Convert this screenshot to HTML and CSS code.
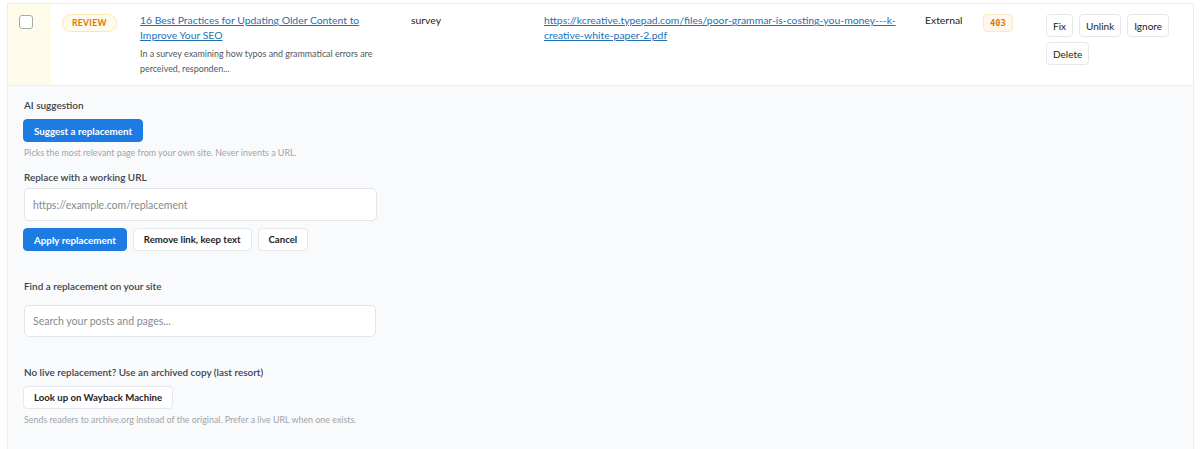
FILE: index.html
```
<!DOCTYPE html>
<html lang="en">
<head>
    <meta charset="UTF-8">
    <meta name="viewport" content="width=device-width, initial-scale=1.0">
    <title>Broken Links</title>
    <link rel="stylesheet" href="styles.css">
</head>
<body>
    <div class="wrap">
        <table class="links">
            <tbody>
                <tr class="link-row">
                    <td class="col-check"><span class="checkbox"></span></td>
                    <td class="col-status"><span class="badge-review">Review</span></td>
                    <td class="col-post">
                        <a href="#" class="post-title">16 Best Practices for Updating Older Content to Improve Your SEO</a>
                        <p class="excerpt">In a survey examining how typos and grammatical errors are perceived, responden...</p>
                    </td>
                    <td class="col-anchor">survey</td>
                    <td class="col-url"><a href="#">https://kcreative.typepad.com/files/poor-grammar-is-costing-you-money---k-creative-white-paper-2.pdf</a></td>
                    <td class="col-type">External</td>
                    <td class="col-code"><span class="badge-code">403</span></td>
                    <td class="col-actions">
                        <div class="actions">
                            <button class="btn">Fix</button>
                            <button class="btn">Unlink</button>
                            <button class="btn">Ignore</button>
                            <button class="btn">Delete</button>
                        </div>
                    </td>
                </tr>
                <tr class="fix-row">
                    <td colspan="8">
                        <div class="fix-panel">
                            <div class="section">
                                <div class="label">AI suggestion</div>
                                <button class="btn btn-primary">Suggest a replacement</button>
                                <div class="hint">Picks the most relevant page from your own site. Never invents a URL.</div>
                            </div>

                            <div class="section section-url">
                                <div class="label">Replace with a working URL</div>
                                <input type="text" class="field" placeholder="https://example.com/replacement">
                                <div class="btn-row">
                                    <button class="btn btn-primary">Apply replacement</button>
                                    <button class="btn btn-light">Remove link, keep text</button>
                                    <button class="btn btn-light">Cancel</button>
                                </div>
                            </div>

                            <div class="section section-search">
                                <div class="label">Find a replacement on your site</div>
                                <input type="text" class="field field-search" placeholder="Search your posts and pages...">
                            </div>

                            <div class="section section-archive">
                                <div class="label">No live replacement? Use an archived copy (last resort)</div>
                                <button class="btn btn-light">Look up on Wayback Machine</button>
                                <div class="hint">Sends readers to archive.org instead of the original. Prefer a live URL when one exists.</div>
                            </div>
                        </div>
                    </td>
                </tr>
            </tbody>
        </table>
    </div>
</body>
</html>
```

FILE: styles.css
```
body {
    margin: 0;
    background: #fff;
    font-family: Lato, "Noto Sans", sans-serif;
    color: #1d2327;
}
.wrap {
    padding: 3px 6px 0 7px;
}
.links {
    width: 100%;
    border-collapse: collapse;
    table-layout: fixed;
}
.link-row td {
    vertical-align: top;
    padding: 9px 12px 9px;
    border-top: 1px solid #eceef1;
    border-bottom: 1px solid #eceef1;
    font-size: 10.4px;
    line-height: 15px;
}
.link-row td:last-child {
    border-right: 1px solid #eceef1;
}
.col-check {
    width: 19px;
    background: #fffbeb;
    border-left: 1px solid #eceef1;
}
.col-status { width: 53px; }
.col-post { width: 247px; }
.col-anchor { width: 109px; }
.col-url { width: 357px; }
.col-type { width: 35px; }
.col-code { width: 39px; }

.checkbox {
    display: block;
    width: 12px;
    height: 12px;
    margin: 2px 0 0 -1px;
    border: 1px solid #a7aaad;
    border-radius: 3px;
    background: #fff;
}
.badge-review {
    display: inline-block;
    margin: 1px 0 0 -1px;
    padding: 0 9px;
    height: 16px;
    line-height: 16px;
    border: 1px solid #fde7b0;
    border-radius: 10px;
    background: #fffbeb;
    color: #d97706;
    font-size: 8.6px;
    font-weight: 700;
    letter-spacing: 0.3px;
    text-transform: uppercase;
}
a {
    color: #2271b1;
}
.post-title {
    display: block;
}
.excerpt {
    margin: 3px 0 0;
    font-size: 8.9px;
    line-height: 15px;
    color: #50575e;
}
.badge-code {
    display: inline-block;
    margin: 1px 0 0 -1px;
    padding: 0 6px;
    height: 16px;
    line-height: 16px;
    border: 1px solid #fde8c4;
    border-radius: 4px;
    background: #fff7ed;
    color: #d97706;
    font-family: "DejaVu Sans Mono", monospace;
    font-size: 8.8px;
    font-weight: 700;
}

.actions {
    display: flex;
    flex-wrap: wrap;
    gap: 5px 6px;
    margin: 1px 0 0 -1px;
}
.btn {
    height: 23px;
    padding: 0 6px;
    border: 1px solid #e6e8eb;
    border-radius: 4px;
    background: #fff;
    color: #1d2327;
    font-family: inherit;
    font-size: 10px;
    cursor: pointer;
}

.fix-row td {
    padding: 0;
    border-left: 1px solid #eceef1;
    border-right: 1px solid #eceef1;
    background: #f9fafb;
}
.fix-panel {
    padding: 12px 16px 30px;
}
.label {
    font-size: 9.95px;
    line-height: 14px;
    font-weight: 600;
    color: #3c434a;
}
.section .btn {
    display: block;
    margin-left: -1px;
}
.btn-primary {
    margin-top: 7px;
    padding: 0 10px;
    background: #1c7ce4;
    border-color: #1c7ce4;
    color: #fff;
    font-size: 9.8px;
    font-weight: 700;
}
.btn-light {
    padding: 0 10px;
    font-size: 9.6px;
    font-weight: 700;
}
.hint {
    margin-top: 5px;
    font-size: 8.9px;
    line-height: 12px;
    color: #a0a5aa;
}
.section-url {
    margin-top: 11px;
}
.field {
    display: block;
    box-sizing: border-box;
    width: 353px;
    height: 33px;
    margin-top: 4px;
    padding: 0 8px;
    border: 1px solid #e3e5e8;
    border-radius: 5px;
    background: #fff;
    font-family: inherit;
    font-size: 10.5px;
}
.field::placeholder {
    color: #858a91;
}
.btn-row {
    display: flex;
    gap: 6px;
    margin-top: 7px;
}
.btn-row .btn {
    margin-top: 0;
}
.btn-row .btn + .btn {
    margin-left: 0;
}
.section-search {
    margin-top: 28px;
}
.field-search {
    width: 352px;
    height: 32px;
    margin-top: 12px;
}
.section-archive {
    margin-top: 28px;
}
.section-archive .btn {
    margin-top: 7px;
}
```
